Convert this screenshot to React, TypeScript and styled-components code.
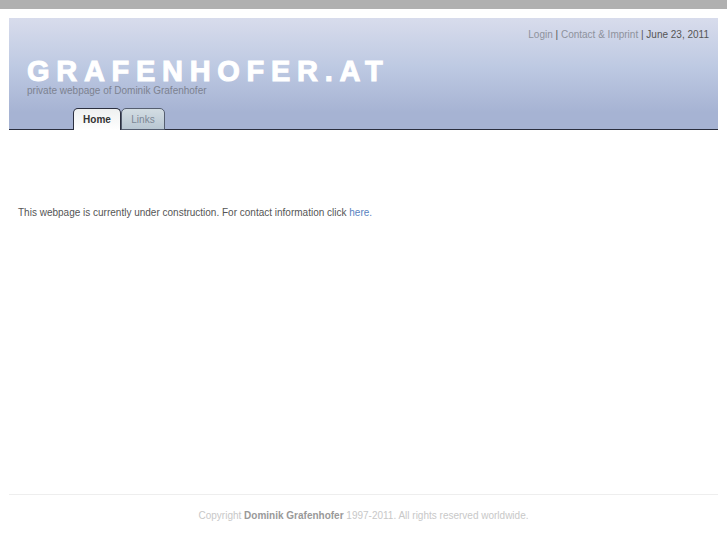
import React from "react";
import styled, { createGlobalStyle } from "styled-components";

const Global = createGlobalStyle`
  html, body { margin: 0; padding: 0; background: #fff; }
  body { font-family: "Liberation Sans", Arial, sans-serif; font-size: 10px; color: #555; }
`;
const TopBar = styled.div`height: 9px; background: #b0b0b0;`;
const Page = styled.div`padding: 9px 9px 0; height: 527px; box-sizing: border-box; display: flex; flex-direction: column;`;
const Header = styled.header`
  height: 112px; box-sizing: border-box; display: flex; flex-direction: column;
  background: linear-gradient(#d8dcec 0%, #bdc9e2 45%, #a6b3d3 85%, #a6b3d3 100%);
  border-bottom: 1px solid #2b2f3f;
`;
const TopNav = styled.div`
  padding: 11px 9px 0 0; text-align: right; line-height: 12px; color: #555;
`;
const NavLink = styled.a`color: #8e929c; text-decoration: none;`;
const Logo = styled.div`
  margin: 18px 0 0 18px; height: 24px; line-height: 24px; white-space: nowrap;
  font-family: "Liberation Sans", Arial, sans-serif; font-weight: 700; font-size: 29px;
  letter-spacing: 6.7px; color: #fff; -webkit-text-stroke: 1px #fff;
`;
const Tagline = styled.div`margin: 2px 0 0 18px; line-height: 12px; color: #7d8290;`;
const Tabs = styled.nav`
  margin-top: auto; margin-bottom: -1px; padding-left: 64px; display: flex; align-items: flex-end;
`;
const Tab = styled.a<{ $active?: boolean }>`
  box-sizing: border-box; display: block; text-align: center; text-decoration: none;
  border: 1px solid ${p => (p.$active ? "#2b2f3f" : "#555e70")};
  border-bottom: ${p => (p.$active ? "none" : "1px solid #555e70")};
  border-radius: 5px 5px 0 0;
  width: ${p => (p.$active ? "48px" : "44px")};
  height: 22px;
  line-height: 21px;
  font-weight: ${p => (p.$active ? 700 : 400)};
  color: ${p => (p.$active ? "#333" : "#7c8796")};
  background: ${p => (p.$active ? "linear-gradient(#eef0f0, #fff)" : "linear-gradient(#d3dde3, #b9c7d3)")};
`;
const Main = styled.main`flex: 1; padding: 76px 0 0 9px; line-height: 13px; color: #555;`;
const Here = styled.a`color: #5a82c0; text-decoration: none;`;
const Footer = styled.footer`
  border-top: 1px solid #eeeeee; margin-top: auto; height: 42px; padding-top: 14px; box-sizing: border-box;
  text-align: center; color: #c8c8c8; line-height: 13px;
`;
const Owner = styled.strong`color: #999;`;

export default function App() {
  return (
    <>
      <Global />
      <TopBar />
      <Page>
        <Header>
          <TopNav>
            <NavLink>Login</NavLink> | <NavLink>Contact &amp; Imprint</NavLink> | June 23, 2011
          </TopNav>
          <Logo>GRAFENHOFER.AT</Logo>
          <Tagline>private webpage of Dominik Grafenhofer</Tagline>
          <Tabs>
            <Tab $active>Home</Tab>
            <Tab>Links</Tab>
          </Tabs>
        </Header>
        <Main>
          This webpage is currently under construction. For contact information click <Here>here.</Here>
        </Main>
        <Footer>
          Copyright <Owner>Dominik Grafenhofer</Owner> 1997-2011. All rights reserved worldwide.
        </Footer>
      </Page>
    </>
  );
}
